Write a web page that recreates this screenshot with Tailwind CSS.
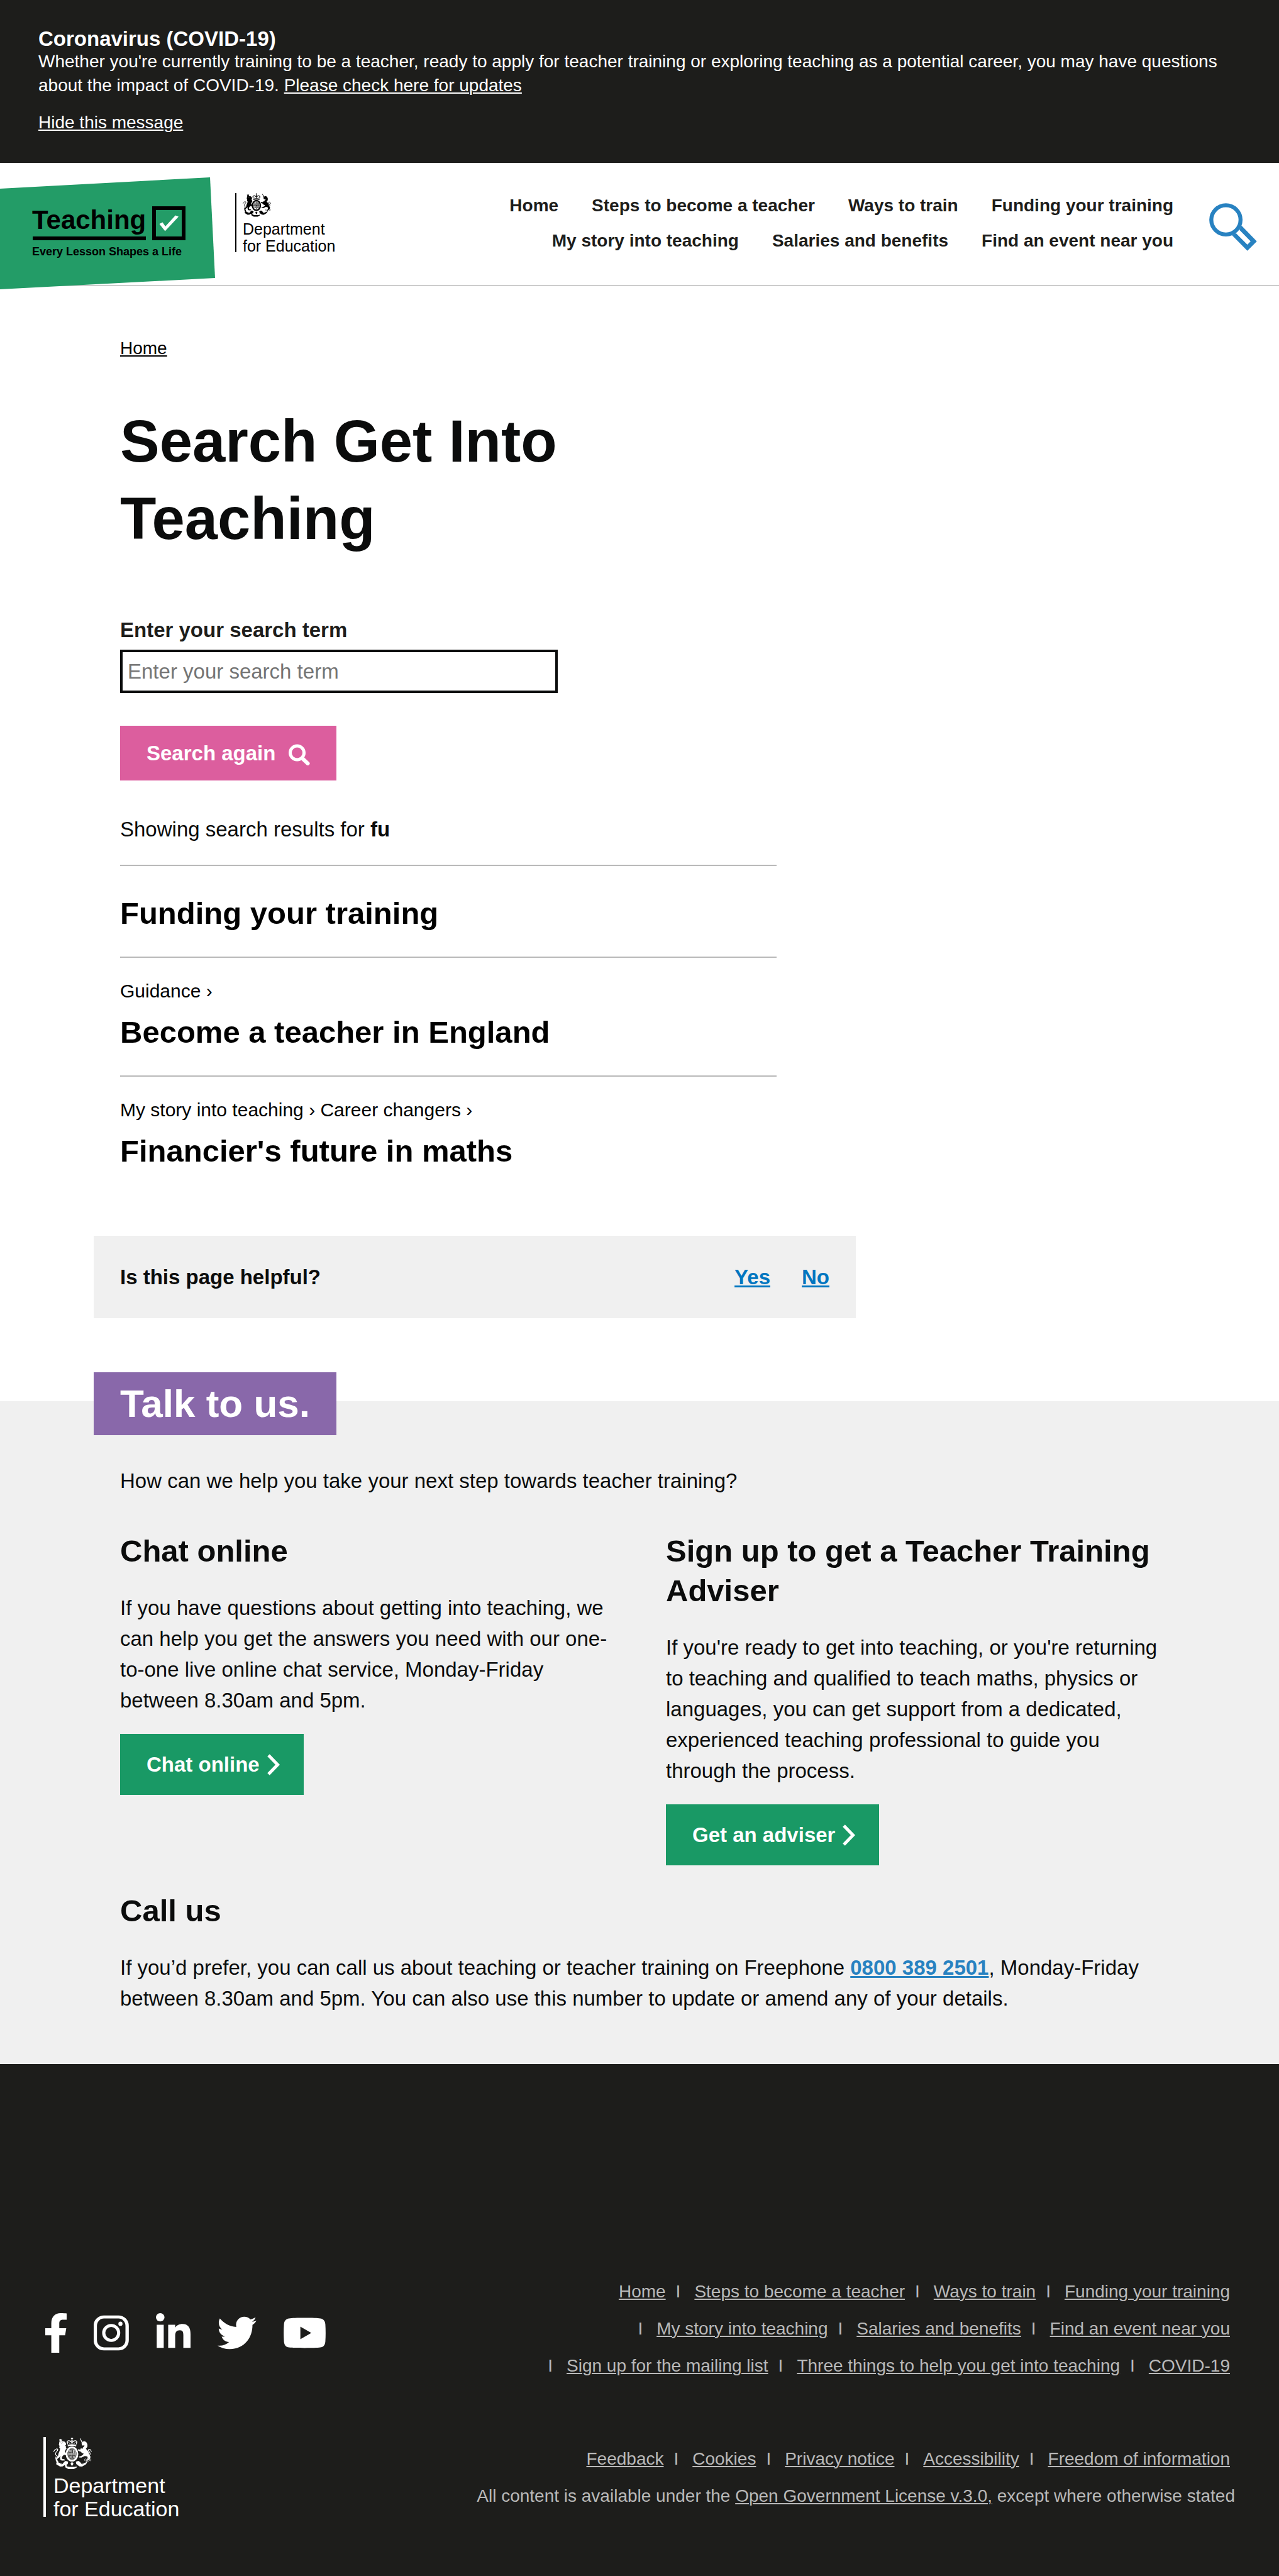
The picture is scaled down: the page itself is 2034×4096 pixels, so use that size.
<!DOCTYPE html>
<html lang="en">
<head>
<meta charset="utf-8">
<meta name="viewport" content="width=device-width, initial-scale=1">
<title>Search | Get Into Teaching</title>
<script src="https://cdn.jsdelivr.net/npm/@tailwindcss/browser@4"></script>
</head>
<body class="bg-white font-['Liberation_Sans',Arial,sans-serif] text-[#0b0c0c] text-[33px] leading-[49px]">

<!-- Royal coat of arms, shared by the header and footer logos -->
<svg width="0" height="0" class="absolute" aria-hidden="true">
  <symbol id="crest" viewBox="84 33 213 177">
    <g fill="currentColor">
      <!-- crown -->
      <path d="M185 33h4v4h4v4h-4v5h-4v-5h-4v-4h4z"/>
      <path d="M162 72c-6-10-6-19 2-22 8-3 16 0 23 6 7-6 15-9 23-6 8 3 8 12 2 22l-4-1c5-8 6-15 1-17-6-2-13 2-19 8l-1 9h-4l-1-9c-6-6-13-10-19-8-5 2-4 9 1 17z"/>
      <path d="M163 74q24-7 48 0l-1 9q-23-6-46 0z"/>
      <circle cx="187" cy="49" r="4"/><circle cx="164" cy="60" r="3"/><circle cx="210" cy="60" r="3"/><circle cx="175" cy="65" r="3"/><circle cx="199" cy="65" r="3"/>
      <!-- lion -->
      <path d="M116 42l4 3 3-5 4 5 5-3-2 11h-12z"/>
      <path d="M117 56l12-3 16 3 8 8 1 10-5 4 6 8-3 5 5 4-6 6-3 10 5 8 6 8-3 7-10-5-6 2-9 11 1 10 13 3 3 6-17 1-8-4-3-13 4-10-8 9-8 5-4 9 6 7 2 7-9-1-6-8 2-14 10-12 3-15 6-14 3-13-5-5 2-10-4-5z"/>
      <!-- unicorn -->
      <path d="M230 39l3-1 14 22-6 1z"/>
      <path d="M240 62l10-7 9-1 10 8 4 12-1 12-8 10 9 9 7 12 3 13 7 10-2 9-8 10-5-1 4-11-9-9-12-2-10 5-9 4-12-1-4-4 12-3 11-6 6-8-9-3-9-9-8-2-7-5 4-6 9 3 5-8 8 4 2-7 8-8 1-7-8 4-6-3z"/>
      <!-- supporting scroll -->
      <path d="M102 168l12 5 20 8 10-12 8-6 14 5-3 13-7 3 3 10 14 3h28l14-3 3-10-7-3-3-13 14-5 9 6 10 12 20-8 12-5-8 14-22 13-14-1-12-8-4 14-16 9h-30l-16-9-4-14-12 8-14 1-22-13z"/>
      <path d="M182 172h10l3 8-8 12-8-12z"/>
    </g>
    <g fill="none" stroke="currentColor">
      <ellipse cx="187" cy="125" rx="30" ry="37" stroke-width="10"/>
      <ellipse cx="187" cy="125" rx="22" ry="29" stroke-width="2"/>
      <path d="M187 96v58M165 125h44" stroke-width="4"/>
      <path d="M171 107h13M170 113h14M170 119h14M194 101v21M199 103v19M204 109v13M171 131h13M172 137h12M174 143h10M192 131h15M192 137h13M192 143h11" stroke-width="3"/>
      <!-- tails and chain -->
      <path d="M110 138c-12-2-18-12-12-22 5-8 12-10 10-16-3-5-12-4-17 3-3 4-4 6-6 10" stroke-width="4"/>
      <path d="M276 137c10-3 15-12 10-20-5-8-10-10-8-15 3-5 10-4 13 2l4 9" stroke-width="4"/>
      <path d="M98 140c-2 12 2 22 10 27M277 140c0 12-4 21-10 27" stroke-width="5"/>
      <circle cx="262" cy="158" r="6" stroke-width="2"/><circle cx="276" cy="161" r="5" stroke-width="2"/><circle cx="288" cy="158" r="5" stroke-width="2"/>
    </g>
    <path d="M121 61l4 1M132 60l4 1M126 66l6 1M161 184l5 4M213 184l-5 4M120 176l10 8M254 176l-10 8" fill="none" stroke="#888" stroke-width="2"/>
  </symbol>
</svg>

<!-- COVID-19 banner -->
<section class="bg-[#1d1d1b] text-white px-[61px] pt-[44px] pb-[45px] text-[28px] leading-[38px]" aria-label="Coronavirus notice">
  <h2 class="font-bold text-[33px] leading-[35px]">Coronavirus (COVID-19)</h2>
  <p>Whether you're currently training to be a teacher, ready to apply for teacher training or exploring teaching as a potential career, you may have questions about the impact of COVID-19. <a href="#" class="underline underline-offset-2 decoration-2">Please check here for updates</a></p>
  <a href="#" class="block w-fit mt-[21px] underline underline-offset-2 decoration-2">Hide this message</a>
</section>

<!-- Site header -->
<header class="flex items-start h-[196px] border-b-2 border-[#cccccc] pr-[35px]">
  <a href="#" class="shrink-0 mt-[23px]" aria-label="Get Into Teaching home">
    <svg width="342" height="178" viewBox="0 0 342 178" class="block">
      <path d="M0 18L334 0l8 160L0 178z" fill="#239c67"/>
      <text x="51" y="82" font-size="42" font-weight="700">Teaching</text>
      <path d="M52 94h180v6H52z"/>
      <path d="M242 46h53v54h-53zM248 52v42h41V52z" fill-rule="evenodd"/>
      <path d="M253.500 74l5-2.500 4.500 6.500 16-17.500 5 2-21.500 23z" fill="#fff"/>
      <text x="51" y="124" font-size="18" font-weight="700">Every Lesson Shapes a Life</text>
    </svg>
  </a>
  <a href="#" class="shrink-0 flex flex-col ml-[32px] mt-[48px] border-l-2 border-black pl-[10px] text-black">
    <svg width="45" height="38" class="block" aria-hidden="true"><use href="#crest"/></svg>
    <span class="mt-[6px] -mb-1 text-[25px] leading-[27px]">Department<br>for Education</span>
  </a>
  <nav class="flex-1 ml-[60px] mt-10 mr-[57px]" aria-label="Main">
    <ul class="flex flex-wrap justify-end gap-x-[53px] font-bold text-[28px] leading-[56px] text-[#1d1d1b]">
      <li><a href="#">Home</a></li>
      <li><a href="#">Steps to become a teacher</a></li>
      <li><a href="#">Ways to train</a></li>
      <li><a href="#">Funding your training</a></li>
      <li><a href="#">My story into teaching</a></li>
      <li><a href="#">Salaries and benefits</a></li>
      <li><a href="#">Find an event near you</a></li>
    </ul>
  </nav>
  <button type="button" class="shrink-0 mt-[64px]" aria-label="Search">
    <svg width="76" height="76" viewBox="109 98 263 263" class="block">
      <circle cx="201" cy="190" r="80.500" fill="none" stroke="#2882c1" stroke-width="22"/>
      <path d="M287 222l84 86-52 52-84-85 21-12 63 63 18-18-62-63z" fill="#2882c1"/>
    </svg>
  </button>
</header>

<main>
  <div class="max-w-[1736px] mx-auto">
    <div class="px-[42px] pt-[81px]">
      <nav aria-label="Breadcrumb" class="text-[28px] leading-[36px] text-black"><a href="#" class="underline underline-offset-2 decoration-2">Home</a></nav>
      <h1 class="mt-[68px] max-w-[784px] font-bold text-[94px] leading-[123px]">Search Get Into Teaching</h1>

      <form class="mt-[95px]" onsubmit="return false">
        <label for="search" class="block font-bold leading-[41px] text-[#1d1d1b]">Enter your search term</label>
        <input id="search" type="text" placeholder="Enter your search term" class="block mt-[11px] w-full max-w-[696px] h-[69px] border-4 border-[#0b0c0c] px-2 bg-white placeholder:text-[#757575]">
        <button type="submit" class="mt-[52px] h-[87px] px-[42px] flex items-center gap-[21px] bg-[#dc5e9e] text-white font-bold">
          Search again
          <svg width="34" height="34" viewBox="0 0 34 34" class="mt-1" fill="none" stroke="#fff" stroke-linecap="round" aria-hidden="true"><circle cx="13.500" cy="14" r="11" stroke-width="5"/><path d="M22 23l8.500 8" stroke-width="6"/></svg>
        </button>
      </form>

      <div class="max-w-[1044px]">
        <p class="mt-[53px]">Showing search results for <b>fu</b></p>
        <ul class="mt-[32px] text-black">
          <li class="border-t-2 border-[#b9b9b9] pt-[44px] pb-[37px]">
            <h2 class="font-bold text-[49px] leading-[63px]"><a href="#">Funding your training</a></h2>
          </li>
          <li class="border-t-2 border-[#b9b9b9] pt-[33px] pb-[37px]">
            <p class="text-[30px] leading-[39px]">Guidance ›</p>
            <h2 class="mt-[15px] font-bold text-[49px] leading-[63px]"><a href="#">Become a teacher in England</a></h2>
          </li>
          <li class="border-t-2 border-[#b9b9b9] pt-[33px] pb-[37px]">
            <p class="text-[30px] leading-[39px]">My story into teaching › Career changers ›</p>
            <h2 class="mt-[15px] font-bold text-[49px] leading-[63px]"><a href="#">Financier's future in maths</a></h2>
          </li>
        </ul>
      </div>
    </div>

    <section class="mt-[66px] max-w-[1212px] h-[131px] px-[42px] flex items-center bg-[#f0f0f0] font-bold" aria-label="Page feedback">
      <p>Is this page helpful?</p>
      <div class="ml-auto flex gap-[50px] text-[#0076c0]">
        <a href="#" class="underline underline-offset-2 decoration-3">Yes</a>
        <a href="#" class="underline underline-offset-2 decoration-3">No</a>
      </div>
    </section>
  </div>

  <section class="mt-[132px] bg-[#f0f0f0] pb-[80px]">
    <div class="max-w-[1736px] mx-auto flow-root">
      <!-- heading tab overlaps the top edge of the section -->
      <h2 class="relative -top-[46px] -mb-[46px] w-fit px-[42px] bg-[#8968aa] text-white font-bold text-[62px] leading-[100px]">Talk to us.</h2>
      <p class="mt-[48px] px-[42px]">How can we help you take your next step towards teacher training?</p>
      <div class="mt-[56px] grid grid-cols-2">
        <div class="px-[42px]">
          <h3 class="font-bold text-[49px] leading-[63px]">Chat online</h3>
          <p class="mt-[34px]">If you have questions about getting into teaching, we can help you get the answers you need with our one-to-one live online chat service, Monday-Friday between 8.30am and 5pm.</p>
          <a href="#" class="mt-[29px] w-fit h-[97px] pl-[42px] pr-[38px] flex items-center gap-[12px] bg-[#199965] text-white font-bold">Chat online
            <svg width="20" height="34" viewBox="0 0 20 34" fill="none" stroke="#fff" stroke-width="5" aria-hidden="true"><path d="M2 2l14.500 15L2 32"/></svg></a>
        </div>
        <div class="px-[42px]">
          <h3 class="font-bold text-[49px] leading-[63px]">Sign up to get a Teacher Training Adviser</h3>
          <p class="mt-[34px]">If you're ready to get into teaching, or you're returning to teaching and qualified to teach maths, physics or languages, you can get support from a dedicated, experienced teaching professional to guide you through the process.</p>
          <a href="#" class="mt-[29px] w-fit h-[97px] pl-[42px] pr-[38px] flex items-center gap-[12px] bg-[#199965] text-white font-bold">Get an adviser
            <svg width="20" height="34" viewBox="0 0 20 34" fill="none" stroke="#fff" stroke-width="5" aria-hidden="true"><path d="M2 2l14.500 15L2 32"/></svg></a>
        </div>
      </div>
      <div class="mt-[41px] px-[42px]">
        <h3 class="font-bold text-[49px] leading-[63px]">Call us</h3>
        <p class="mt-[34px]">If you’d prefer, you can call us about teaching or teacher training on Freephone <a href="tel:08003892501" class="font-bold text-[#2882c1] underline underline-offset-2 decoration-3">0800 389 2501</a>, Monday-Friday between 8.30am and 5pm. You can also use this number to update or amend any of your details.</p>
      </div>
    </div>
  </section>
</main>

<footer class="bg-[#1d1d1b] text-[#b9b9b9] flex justify-between pt-[332px] pb-[94px] pl-[69px] pr-[70px] text-[28px] leading-[59px]">
  <div class="shrink-0 text-white">
    <ul class="mt-[64px] pl-[3px] flex gap-[43px]">
      <li><a href="#" aria-label="Facebook"><svg class="block" width="34" height="63" viewBox="64 57 110 216" preserveAspectRatio="none" fill="#fff"><path d="M95 273V178H64v-39h31v-26C95 74 116 57 143 57c12 0 24 1 31 2v34h-19c-15 0-19 8-19 21v25h36l-6 39h-30v95z"/></svg></a></li>
      <li><a href="#" aria-label="Instagram"><svg class="block" width="56" height="63" viewBox="316 57 179 216" preserveAspectRatio="none" fill="none" stroke="#fff"><rect x="324" y="78" width="162" height="174" rx="44" ry="48" stroke-width="17"/><ellipse cx="405" cy="165" rx="38" ry="41" stroke-width="16"/><ellipse cx="452" cy="115" rx="10.500" ry="11.500" fill="#fff" stroke="none"/></svg></a></li>
      <li><a href="#" aria-label="LinkedIn"><svg class="block" width="55" height="63" viewBox="626 57 178 216" preserveAspectRatio="none" fill="#fff"><ellipse cx="648" cy="79.500" rx="22" ry="22.500"/><path d="M630 120h36v126h-36zM689 120h36v16c8-13 22-20 37-20 30 0 42 20 42 55v75h-37v-68c0-18-3-28-18-28-17 0-24 11-24 30v66h-36z"/></svg></a></li>
      <li><a href="#" aria-label="Twitter"><svg class="block" width="62" height="63" viewBox="940 57 200 216" preserveAspectRatio="none" fill="#fff"><path d="M1119 121c1 64-38 132-117 132-23 0-45-7-62-19 21 3 43-3 59-19-18 0-33-13-38-30 6 1 12 1 18-1-20-5-33-22-33-43 6 3 12 5 19 5-19-13-24-39-13-60 21 27 50 44 84 46-6-30 14-55 41-55 12 0 23 5 31 14 9-2 18-6 27-11-3 10-9 18-18 24 8-1 16-3 23-7-5 10-12 18-21 24z"/></svg></a></li>
      <li><a href="#" aria-label="YouTube"><svg class="block" width="67" height="63" viewBox="1280 57 216 216" preserveAspectRatio="none" fill="#fff"><path fill-rule="evenodd" d="M1388 83c40 0 66 1 80 3 16 2 24 12 26 31 2 32 2 64 0 96-2 19-10 29-26 31-28 4-132 4-160 0-16-2-24-12-26-31-2-32-2-64 0-96 2-19 10-29 26-31 14-2 40-3 80-3zM1366 131v68l56-34z"/></svg></a></li>
    </ul>
    <a href="#" class="flex flex-col w-fit mt-[134px] border-l-4 border-white pl-[12px]">
      <svg width="61" height="52" class="block" aria-hidden="true"><use href="#crest"/></svg>
      <span class="mt-[7px] -mb-1.5 text-[34px] leading-[37px]">Department<br>for Education</span>
    </a>
  </div>
  <div class="w-full max-w-[1220px] text-right">
    <ul class="flex flex-wrap justify-end mr-2">
      <li><a href="#" class="underline underline-offset-2 decoration-2">Home</a></li>
      <li><span class="ml-4 mr-[22px]" aria-hidden="true">I</span><a href="#" class="underline underline-offset-2 decoration-2">Steps to become a teacher</a></li>
      <li><span class="ml-4 mr-[22px]" aria-hidden="true">I</span><a href="#" class="underline underline-offset-2 decoration-2">Ways to train</a></li>
      <li><span class="ml-4 mr-[22px]" aria-hidden="true">I</span><a href="#" class="underline underline-offset-2 decoration-2">Funding your training</a></li>
      <li><span class="ml-4 mr-[22px]" aria-hidden="true">I</span><a href="#" class="underline underline-offset-2 decoration-2">My story into teaching</a></li>
      <li><span class="ml-4 mr-[22px]" aria-hidden="true">I</span><a href="#" class="underline underline-offset-2 decoration-2">Salaries and benefits</a></li>
      <li><span class="ml-4 mr-[22px]" aria-hidden="true">I</span><a href="#" class="underline underline-offset-2 decoration-2">Find an event near you</a></li>
      <li><span class="ml-4 mr-[22px]" aria-hidden="true">I</span><a href="#" class="underline underline-offset-2 decoration-2">Sign up for the mailing list</a></li>
      <li><span class="ml-4 mr-[22px]" aria-hidden="true">I</span><a href="#" class="underline underline-offset-2 decoration-2">Three things to help you get into teaching</a></li>
      <li><span class="ml-4 mr-[22px]" aria-hidden="true">I</span><a href="#" class="underline underline-offset-2 decoration-2">COVID-19</a></li>
    </ul>
    <ul class="mt-[89px] flex flex-wrap justify-end mr-2">
      <li><a href="#" class="underline underline-offset-2 decoration-2">Feedback</a></li>
      <li><span class="ml-4 mr-[22px]" aria-hidden="true">I</span><a href="#" class="underline underline-offset-2 decoration-2">Cookies</a></li>
      <li><span class="ml-4 mr-[22px]" aria-hidden="true">I</span><a href="#" class="underline underline-offset-2 decoration-2">Privacy notice</a></li>
      <li><span class="ml-4 mr-[22px]" aria-hidden="true">I</span><a href="#" class="underline underline-offset-2 decoration-2">Accessibility</a></li>
      <li><span class="ml-4 mr-[22px]" aria-hidden="true">I</span><a href="#" class="underline underline-offset-2 decoration-2">Freedom of information</a></li>
    </ul>
    <p>All content is available under the <a href="#" class="underline underline-offset-2 decoration-2">Open Government License v.3.0,</a> except where otherwise stated</p>
  </div>
</footer>
</body>
</html>
